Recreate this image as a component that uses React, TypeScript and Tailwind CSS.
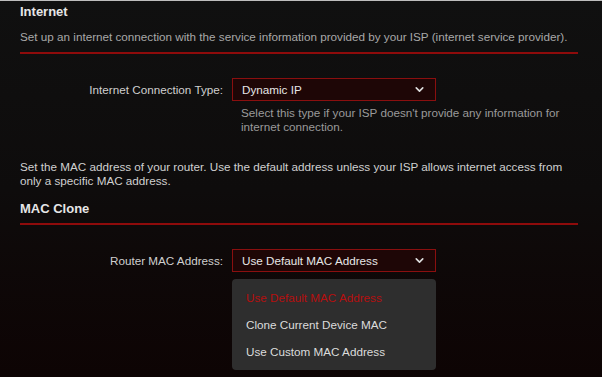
import { ChevronDown } from 'lucide-react'
import type { ReactNode } from 'react'

function SectionTitle({ children }: { children: ReactNode }) {
  return <h2 className="text-[13px] font-bold leading-4 text-[#e6e6e6]">{children}</h2>
}

function RedRule() {
  return <div className="h-[2px] w-full bg-[#8e0b0b]" />
}

function Row({ label, children }: { label: string; children: ReactNode }) {
  return (
    <div className="flex items-start">
      <span className="w-[212px] shrink-0 pr-[9px] pt-[4px] text-right text-[11.7px] leading-[15px] text-[#cfcfcf]">
        {label}
      </span>
      {children}
    </div>
  )
}

function SelectBox({ value }: { value: string }) {
  return (
    <div className="flex h-[23px] w-[204px] items-center justify-between border border-[#8a0f0f] bg-[#1e0606] pl-[9px] pr-[9px] text-[11.7px] text-[#e6e6e6]">
      <span>{value}</span>
      <ChevronDown size={13} strokeWidth={3} className="text-[#dddddd]" />
    </div>
  )
}

const macOptions = ['Use Default MAC Address', 'Clone Current Device MAC', 'Use Custom MAC Address']

export default function App() {
  return (
    <div
      className="h-[377px] w-[602px] overflow-hidden border-t border-[#bdbdbd] bg-gradient-to-b from-[#101010] via-[#0e0c0c] to-[#0d0404] px-[20px] pt-[3px]"
      style={{ fontFamily: '"Liberation Sans", Arial, sans-serif' }}
    >
      <div className="w-[558px]">
        <SectionTitle>Internet</SectionTitle>
        <p className="mt-[9px] whitespace-nowrap text-[11.7px] leading-[15px] text-[#a8a8a8]">
          Set up an internet connection with the service information provided by your ISP (internet service provider).
        </p>
        <div className="mt-[8px]">
          <RedRule />
        </div>

        <div className="mt-[24px]">
          <Row label="Internet Connection Type:">
            <div className="flex flex-col">
              <SelectBox value="Dynamic IP" />
              <p className="mt-[5px] w-[356px] pl-[9px] text-[11.7px] leading-[14px] text-[#9a9a9a]">
                Select this type if your ISP doesn't provide any information for internet connection.
              </p>
            </div>
          </Row>
        </div>

        <p className="mt-[26px] text-[11.7px] leading-[14px] text-[#d0d0d0]">
          Set the MAC address of your router. Use the default address unless your ISP allows internet access from only a specific MAC address.
        </p>

        <div className="mt-[13px]">
          <SectionTitle>MAC Clone</SectionTitle>
        </div>
        <div className="mt-[6px]">
          <RedRule />
        </div>

        <div className="mt-[24px]">
          <Row label="Router MAC Address:">
            <div className="flex flex-col">
              <SelectBox value="Use Default MAC Address" />
              <ul className="mt-[7px] flex w-[204px] flex-col gap-[12px] rounded-[4px] bg-[#2e2e2e] pb-[11px] pl-[14px] pt-[11px] text-[11.7px] leading-[15px] text-[#dcdcdc]">
                {macOptions.map((option, index) => (
                  <li key={option} className={index === 0 ? 'text-[#b50f0f]' : ''}>
                    {option}
                  </li>
                ))}
              </ul>
            </div>
          </Row>
        </div>
      </div>
    </div>
  )
}
